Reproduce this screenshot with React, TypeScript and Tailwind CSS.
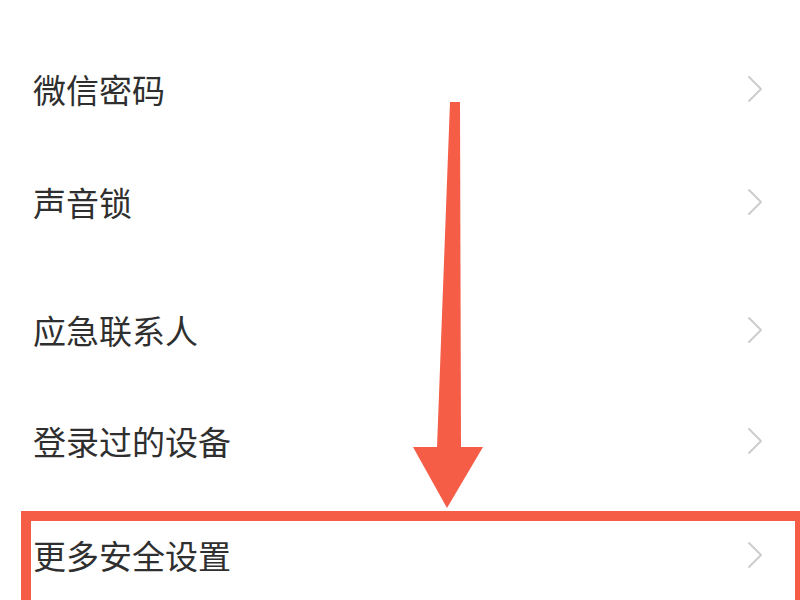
import React from "react";

type Row = { label: string; h: string };

const rows: Row[] = [
  { label: "微信密码", h: "h-[110px]" },
  { label: "声音锁", h: "h-[116px]" },
  { label: "应急联系人", h: "h-[140px]" },
  { label: "登录过的设备", h: "h-[82px]" },
  { label: "更多安全设置", h: "h-[146px]" },
];

function Chevron() {
  return (
    <svg width="16" height="28" viewBox="0 0 16 28" fill="none" className="shrink-0">
      <path d="M2 2 L14 14 L2 26" stroke="#cdcdcd" strokeWidth="2" strokeLinecap="round" strokeLinejoin="round" />
    </svg>
  );
}

export default function App() {
  return (
    <div
      className="relative w-[800px] h-[600px] overflow-hidden bg-white"
      style={{ fontFamily: '"Noto Sans CJK SC", "Noto Sans", sans-serif' }}
    >
      <div className="flex flex-col pt-[34px]">
        {rows.map((r) => (
          <div key={r.label} className={`flex items-center justify-between pl-[33px] pr-[37px] ${r.h}`}>
            <span className="text-[33px] leading-none text-[#2f2f2f]">{r.label}</span>
            <Chevron />
          </div>
        ))}
      </div>

      {/* highlight frame around the last entry */}
      <div className="absolute left-[21px] top-[511px] w-[784px] h-[120px] border-[10px] border-[#f65d47]" />

      {/* pointer arrow */}
      <svg className="absolute inset-0 pointer-events-none" width="800" height="600" viewBox="0 0 800 600">
        <polygon points="450,102 460,102 461,448 437,448" fill="#f65d47" />
        <polygon points="413,447 483,447 447,508" fill="#f65d47" />
      </svg>
    </div>
  );
}
